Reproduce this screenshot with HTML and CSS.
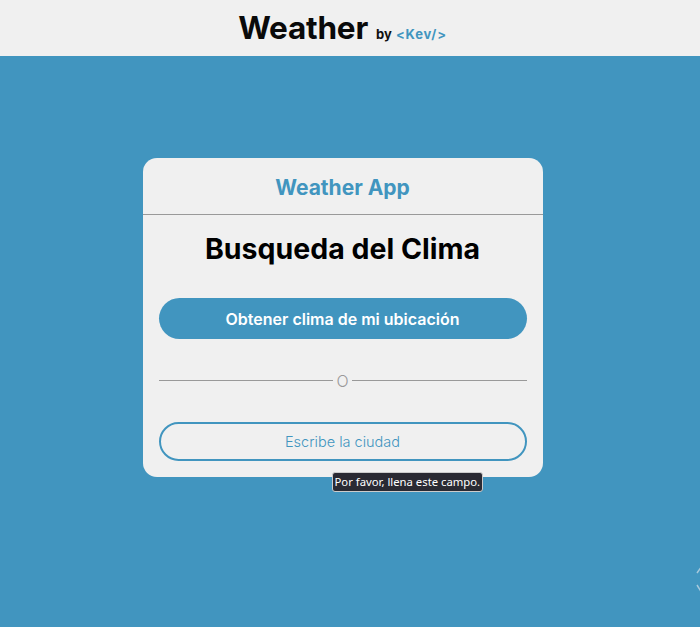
FILE: index.html
```html
<!DOCTYPE html>
<html lang="es">
<head>
<meta charset="utf-8">
<title>Weather by Kev</title>
<link rel="stylesheet" href="styles.css">
</head>
<body>
<header class="topbar">
  <h1 class="brand">Weather</h1>
  <span class="by">by <span class="kev">&lt;Kev/&gt;</span></span>
</header>
<main class="stage">
  <section class="card">
    <div class="card-head">Weather App</div>
    <div class="card-body">
      <h2 class="title">Busqueda del Clima</h2>
      <button class="locate">Obtener clima de mi ubicación</button>
      <div class="divider"><span class="line"></span><span class="or">O</span><span class="line"></span></div>
      <div class="field">
        <input class="city" type="text" placeholder="Escribe la ciudad">
        <div class="tooltip">Por favor, llena este campo.</div>
      </div>
    </div>
  </section>
  <div class="scroll-hint">
    <svg width="10" height="34" viewBox="0 0 10 34"><path d="M2 10 L7 3 M2 22 L7 30" stroke="#a7c9dc" stroke-width="1.5" fill="none"/></svg>
  </div>
</main>
</body>
</html>
```
FILE: styles.css
```css
html, body {
  margin: 0;
  padding: 0;
  height: 100%;
}
body {
  background: #4195bf;
  font-family: "Inter", "Noto Sans", sans-serif;
  overflow: hidden;
}
.topbar {
  height: 56px;
  background: #f0f0f0;
  display: flex;
  align-items: center;
  justify-content: center;
  gap: 8px;
  padding-right: 15px;
}
.brand {
  margin: 0;
  font-size: 31.5px;
  font-weight: 700;
  color: #0a0a0a;
  letter-spacing: -0.2px;
  padding-bottom: 2px;
}
.by {
  font-size: 13px;
  font-weight: 700;
  color: #111;
  padding-top: 12px;
}
.kev {
  color: #4195bf;
  font-size: 13px;
  letter-spacing: 0.8px;
  margin-left: 1px;
}
.stage {
  position: relative;
  height: calc(100% - 56px);
  display: flex;
  justify-content: center;
  align-items: flex-start;
  padding-top: 102px;
  padding-right: 15px;
  box-sizing: border-box;
}
.card {
  width: 400px;
  background: #f0f0f0;
  border-radius: 14px;
}
.card-head {
  height: 57px;
  border-bottom: 1px solid #999;
  display: flex;
  align-items: center;
  justify-content: center;
  color: #4195bf;
  font-size: 21px;
  font-weight: 700;
  padding-top: 2px;
  box-sizing: border-box;
}
.card-body {
  padding: 17px 16px 16px;
  display: flex;
  flex-direction: column;
}
.title {
  margin: 0;
  text-align: center;
  font-size: 28.5px;
  font-weight: 700;
  color: #000;
  height: 34px;
  line-height: 34px;
}
.locate {
  margin-top: 32px;
  height: 41px;
  border: none;
  border-radius: 21px;
  background: #4195bf;
  color: #fff;
  font-family: inherit;
  font-size: 16px;
  font-weight: 600;
  cursor: pointer;
}
.divider {
  margin-top: 33px;
  display: flex;
  align-items: center;
  gap: 3px;
  height: 16px;
}
.line {
  flex: 1;
  height: 1px;
  background: #999;
}
.or {
  color: #999;
  font-size: 16px;
  font-weight: 300;
  line-height: 16px;
  padding-top: 1px;
}
.field {
  position: relative;
  margin-top: 34px;
}
.city {
  width: 100%;
  box-sizing: border-box;
  height: 39px;
  border: 2px solid #4195bf;
  border-radius: 20px;
  background: #f0f0f0;
  text-align: center;
  font-family: inherit;
  font-size: 14.5px;
  font-weight: 300;
  color: #4195bf;
  outline: none;
}
.city::placeholder {
  color: #4195bf;
  opacity: 1;
}
.tooltip {
  position: absolute;
  left: 173px;
  top: 50px;
  background: #2a2a33;
  color: #fff;
  font-family: "Noto Sans", "DejaVu Sans", sans-serif;
  font-size: 11.3px;
  line-height: 18px;
  padding: 0 2px;
  border: 1px solid #ccc;
  border-radius: 3px;
  white-space: nowrap;
}
.scroll-hint {
  position: absolute;
  right: -5px;
  bottom: 26px;
}
```
